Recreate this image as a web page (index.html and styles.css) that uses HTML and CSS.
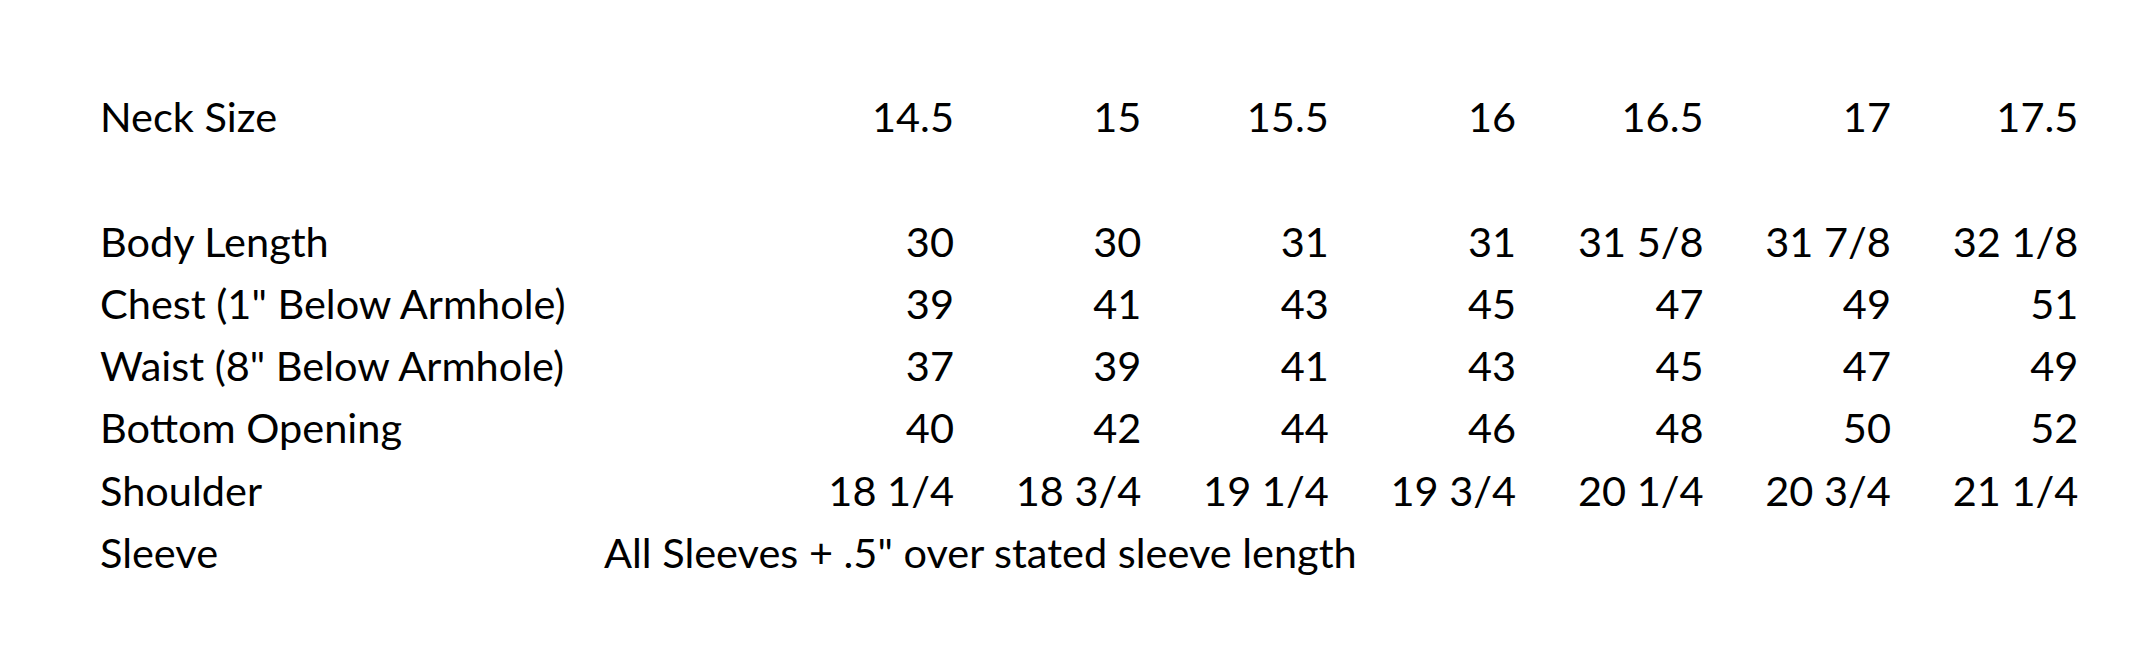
FILE: index.html
```html
<!DOCTYPE html>
<html>
<head>
<meta charset="utf-8">
<link rel="stylesheet" href="styles.css">
</head>
<body>
<div class="sheet">
  <div class="label">Neck Size</div>
  <div class="v c2">14.5</div><div class="v">15</div><div class="v">15.5</div><div class="v">16</div><div class="v">16.5</div><div class="v">17</div><div class="v">17.5</div>

  <div class="blank"></div>

  <div class="label">Body Length</div>
  <div class="v c2">30</div><div class="v">30</div><div class="v">31</div><div class="v">31</div><div class="v">31 5/8</div><div class="v">31 7/8</div><div class="v">32 1/8</div>

  <div class="label">Chest (1" Below Armhole)</div>
  <div class="v c2">39</div><div class="v">41</div><div class="v">43</div><div class="v">45</div><div class="v">47</div><div class="v">49</div><div class="v">51</div>

  <div class="label">Waist (8" Below Armhole)</div>
  <div class="v c2">37</div><div class="v">39</div><div class="v">41</div><div class="v">43</div><div class="v">45</div><div class="v">47</div><div class="v">49</div>

  <div class="label">Bottom Opening</div>
  <div class="v c2">40</div><div class="v">42</div><div class="v">44</div><div class="v">46</div><div class="v">48</div><div class="v">50</div><div class="v">52</div>

  <div class="label">Shoulder</div>
  <div class="v c2">18 1/4</div><div class="v">18 3/4</div><div class="v">19 1/4</div><div class="v">19 3/4</div><div class="v">20 1/4</div><div class="v">20 3/4</div><div class="v">21 1/4</div>

  <div class="label">Sleeve</div>
  <div class="note">All Sleeves + .5" over stated sleeve length</div>
</div>
</body>
</html>
```

FILE: styles.css
```css
html, body {
  margin: 0;
  padding: 0;
  background: #ffffff;
}

body {
  width: 2141px;
  height: 657px;
  overflow: hidden;
}

.sheet {
  display: grid;
  grid-template-columns: 504px 350px repeat(6, 187.4px);
  grid-auto-rows: 62.3px;
  padding: 85px 0 0 100px;
  font-family: Lato, "Liberation Sans", sans-serif;
  font-size: 41.5px;
  line-height: 62.3px;
  color: #000000;
  white-space: nowrap;
}

.label {
  grid-column: 1;
}

.v {
  text-align: right;
}

.c2 {
  grid-column: 2;
}

.blank {
  grid-column: 1 / -1;
}

.note {
  grid-column: 2 / -1;
  text-align: left;
}
```
